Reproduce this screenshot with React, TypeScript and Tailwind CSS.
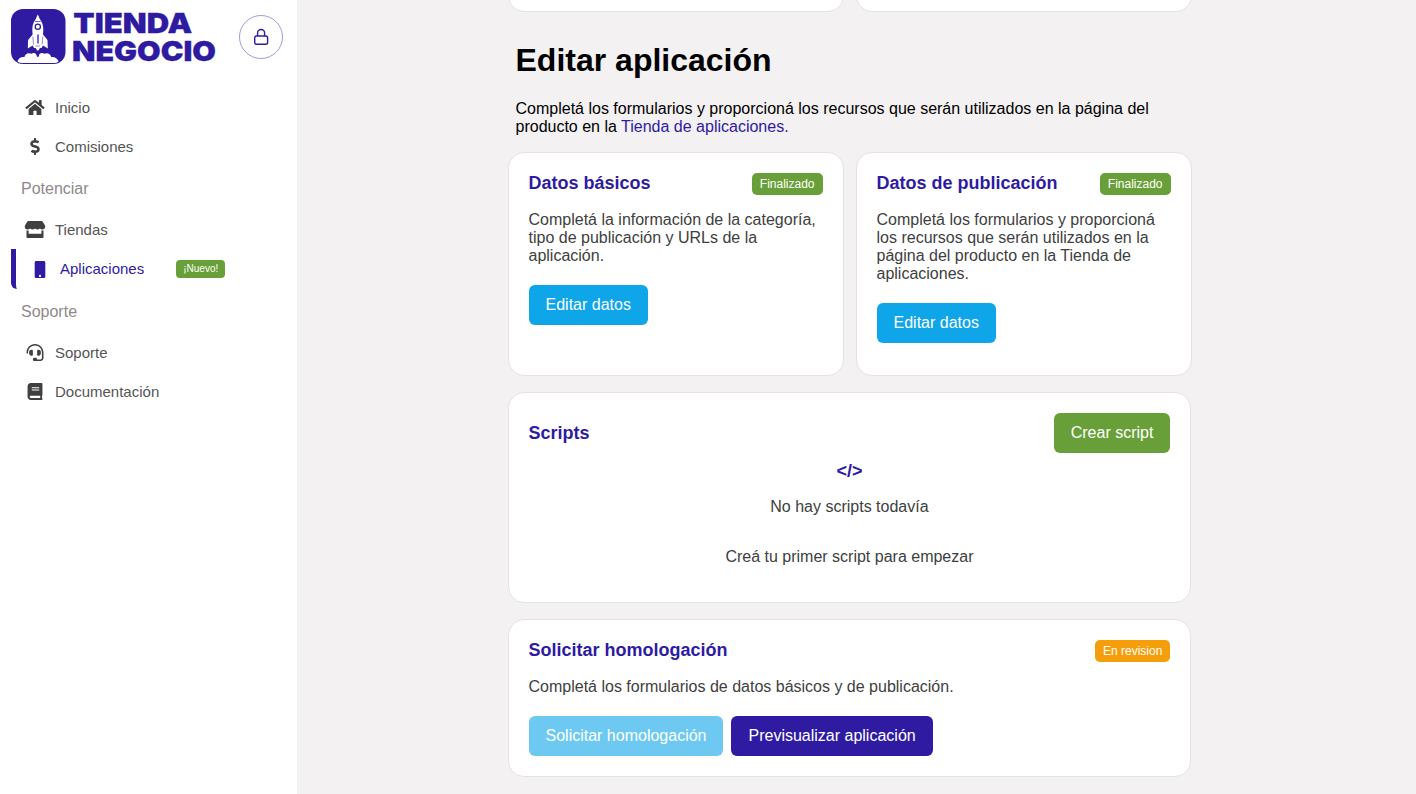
import type { ReactNode } from "react";
import { FaHome, FaDollarSign, FaStore, FaMobile, FaHeadset, FaBook } from "react-icons/fa";

function Logo() {
  return (
    <svg width="206" height="60" viewBox="0 0 206 60" role="img" aria-label="Tienda Negocio" className="overflow-visible">
      <rect x="0" y="0" width="54.500" height="55" rx="12" fill="#2f1ba2" />
      <path d="M26.800 5.500c1 2 1.500 3 2 4.500 2.500 3.500 3.500 6.500 3.500 10.500l-.3 5 4.500 5.500.3 8.500-4.800-3-1.500 2.500h-7.400l-1.500-2.500-4.800 3 .3-8.500 4.500-5.500-.3-5c0-4 1-7 3.500-10.500.5-1.500 1-2.500 2-4.500z" fill="#fff" />
      <path d="M24.500 37.500h4.600l-.6 2.500-1.700 2-1.700-2z" fill="#fff" />
      <circle cx="26.800" cy="17.800" r="2.600" fill="#fff" stroke="#2f1ba2" strokeWidth="1.300" />
      <path d="M24 12.500h5.600" stroke="#2f1ba2" strokeWidth="0.700" />
      <path d="M27 25.500v9" stroke="#2f1ba2" strokeWidth="1.300" />
      <path d="M21.800 27.500l.7 8M31.800 27.500l-.7 8M24.500 37h4.600" stroke="#2f1ba2" strokeWidth="0.500" />
      <path d="M6.500 52.500c.5-3 3.500-5 7-4.500 0-2.500 3.500-5 7-3.200 1.500-1.300 4-.8 4.800.7.300 1 .5 2.500 1.500 2.500s1.200-1.500 1.500-2.500c.8-1.500 3.300-2 4.800-.7 3.500-1.800 7 .7 7 3.200 3.500-.5 6.500 1.500 7.500 4.500-1.500 1-3 1.500-5 1.500H12c-2 0-4-.5-5.500-1.500z" fill="#fff" />
      <g fill="#2f1ba2" stroke="#2f1ba2" strokeWidth="0.300" className="font-['Inter',sans-serif] text-[27.500px] font-black">
        <text x="62.300" y="23.800" textLength="119" lengthAdjust="spacingAndGlyphs">TIENDA</text>
        <text x="61" y="51.800" textLength="144" lengthAdjust="spacingAndGlyphs">NEGOCIO</text>
      </g>
    </svg>
  );
}

function NavItem({ icon, children }: { icon: ReactNode; children: ReactNode }) {
  return (
    <a className="flex h-[39px] items-center pl-[23px] text-[15px] text-[#555]">
      <span className="mr-[8px] flex w-[24px] justify-center text-[#404040]">{icon}</span>
      {children}
    </a>
  );
}

function Section({ children }: { children: ReactNode }) {
  return <div className="flex h-[44px] items-center pt-[2px] pl-[21px] text-[#8f898b]">{children}</div>;
}

function Card({ className = "", children }: { className?: string; children?: ReactNode }) {
  return <section className={`rounded-[16px] border border-[#e4e3e4] bg-white p-[20px] ${className}`}>{children}</section>;
}

function Badge({ color, children }: { color: string; children: ReactNode }) {
  return <span className={`flex h-[22px] items-center rounded-[5px] px-[8px] text-[12px] text-white ${color}`}>{children}</span>;
}

function Button({ color, children }: { color: string; children: ReactNode }) {
  return <button className={`h-[40px] rounded-[6px] px-[17px] pb-px text-white ${color}`}>{children}</button>;
}

function Title({ children }: { children: ReactNode }) {
  return <h2 className="text-[18px] leading-[20px] font-bold text-[#2f1ba2]">{children}</h2>;
}

export default function App() {
  return (
    <div className="flex h-[794px] w-[1416px] overflow-hidden bg-[#f3f1f2] font-['Liberation_Sans',sans-serif] text-[16px] leading-[18px]">
      <aside className="w-[297px] shrink-0 bg-white">
        <header className="flex h-[88px] items-start justify-between pt-[9px] pr-[14px] pl-[11px]">
          <Logo />
          <button className="mt-[6px] flex size-[44px] items-center justify-center rounded-full border border-[#a59bd6] text-[#2f1ba2]">
            <svg width="16" height="18" viewBox="0 0 16 18" fill="none" stroke="currentColor" strokeWidth="1.400">
              <rect x="1.700" y="8" width="12.900" height="8.300" rx="1.800" />
              <path d="M4.600 8V5a3.500 3.500 0 0 1 7 0v3" />
            </svg>
          </button>
        </header>
        <nav>
          <NavItem icon={<FaHome className="h-[17px] w-[20px]" />}>Inicio</NavItem>
          <NavItem icon={<FaDollarSign className="h-[17px] w-[18px]" />}>Comisiones</NavItem>
          <Section>Potenciar</Section>
          <NavItem icon={<FaStore className="h-[17px] w-[22px]" />}>Tiendas</NavItem>
          <a className="ml-[11px] flex h-[40px] items-center rounded-bl-[6px] border-l-[5px] border-[#2f1ba2] pb-px pl-[12px] text-[15px] text-[#2f1ba2]">
            <span className="mr-[8px] flex w-[24px] justify-center pt-[2px]"><FaMobile className="h-[17px] w-[18px]" /></span>
            Aplicaciones
            <span className="ml-[32px] flex h-[18px] items-center rounded-[4px] bg-[#689f38] px-[7px] text-[10px] text-white">¡Nuevo!</span>
          </a>
          <Section>Soporte</Section>
          <NavItem icon={<FaHeadset className="h-[17px] w-[18px]" />}>Soporte</NavItem>
          <NavItem icon={<FaBook className="h-[17px] w-[18px]" />}>Documentación</NavItem>
        </nav>
      </aside>

      <main className="ml-[210.500px] w-[685px]">
        <div className="flex gap-[12px]">
          <Card className="-mt-[30px] h-[42px] w-[336px]" />
          <Card className="-mt-[30px] h-[42px] w-[336px]" />
        </div>
        <h1 className="mt-[30px] ml-[8px] text-[32px] leading-[36px] font-bold">Editar aplicación</h1>
        <p className="mt-[22px] ml-[8px] w-[668px]">
          Completá los formularios y proporcioná los recursos que serán utilizados en la página del producto en la{" "}
          <a className="text-[#2f1ba2]">Tienda de aplicaciones.</a>
        </p>
        <div className="mt-[16px] flex gap-[12px]">
          <Card className="h-[224px] w-[336px]">
            <div className="flex justify-between"><Title>Datos básicos</Title><Badge color="bg-[#689f38]">Finalizado</Badge></div>
            <p className="mt-[16px] mb-[20px] text-[#404040]">Completá la información de la categoría, tipo de publicación y URLs de la aplicación.</p>
            <Button color="bg-[#0ea5e9]">Editar datos</Button>
          </Card>
          <Card className="h-[224px] w-[336px]">
            <div className="flex justify-between"><Title>Datos de publicación</Title><Badge color="bg-[#689f38]">Finalizado</Badge></div>
            <p className="mt-[16px] mb-[20px] text-[#404040]">Completá los formularios y proporcioná los recursos que serán utilizados en la página del producto en la Tienda de aplicaciones.</p>
            <Button color="bg-[#0ea5e9]">Editar datos</Button>
          </Card>
        </div>
        <Card className="mt-[16px] h-[211px] w-[683.900px]">
          <div className="flex items-center justify-between"><Title>Scripts</Title><Button color="bg-[#689f38]">Crear script</Button></div>
          <div className="mt-[8px] flex flex-col items-center text-[#404040]">
            <Title>{"</>"}</Title>
            <p className="mt-[17px]">No hay scripts todavía</p>
            <p className="mt-[32px]">Creá tu primer script para empezar</p>
          </div>
        </Card>
        <Card className="mt-[16px] h-[158px] w-[683.900px]">
          <div className="flex justify-between"><Title>Solicitar homologación</Title><Badge color="bg-[#f59e0b]">En revision</Badge></div>
          <p className="mt-[16px] mb-[20px] text-[#404040]">Completá los formularios de datos básicos y de publicación.</p>
          <div className="flex gap-[8px]">
            <Button color="bg-[#6ec9f2]">Solicitar homologación</Button>
            <Button color="bg-[#2f1ba2]">Previsualizar aplicación</Button>
          </div>
        </Card>
      </main>
    </div>
  );
}
